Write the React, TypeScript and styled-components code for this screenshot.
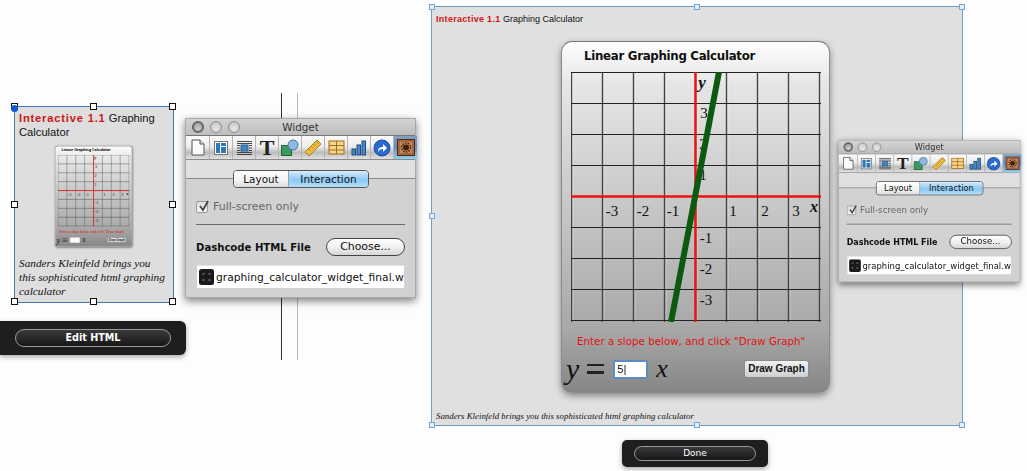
import React from 'react';
import styled, { createGlobalStyle } from 'styled-components';

const GlobalStyle = createGlobalStyle`
  html, body {
    margin: 0;
    padding: 0;
    background: #fdfdfd;
    overflow: hidden;
  }
`;

const Desktop = styled.div`
  position: relative;
  width: 1027px;
  height: 471px;
  overflow: hidden;
  font-family: "Liberation Sans", sans-serif;
`;

/* things on the free canvas */
const Placed = styled.div<{ $x: number; $y: number }>`
  position: absolute;
  left: ${(p) => p.$x}px;
  top: ${(p) => p.$y}px;
`;

const GuideLine = styled.div<{ $x: number; $color: string }>`
  position: absolute;
  left: ${(p) => p.$x}px;
  top: 93px;
  width: 1px;
  height: 267px;
  background: ${(p) => p.$color};
`;

const SelectedBox = styled.div<{ $w: number; $h: number; $blue?: boolean }>`
  position: relative;
  box-sizing: border-box;
  width: ${(p) => p.$w}px;
  height: ${(p) => p.$h}px;
  background: ${(p) => (p.$blue ? '#e0e0e0' : '#dedede')};
  border: 1px solid ${(p) => (p.$blue ? '#6f9cc9' : '#3f78b0')};
`;

const Handle = styled.span<{ $l: number; $t: number; $blue?: boolean }>`
  position: absolute;
  left: ${(p) => p.$l}%;
  top: ${(p) => p.$t}%;
  box-sizing: border-box;
  width: ${(p) => (p.$blue ? 6 : 7)}px;
  height: ${(p) => (p.$blue ? 6 : 7)}px;
  margin: ${(p) => (p.$blue ? '-3px 0 0 -3px' : '-4px 0 0 -4px')};
  background: ${(p) => (p.$blue ? '#e4eff9' : '#fff')};
  border: 1px solid ${(p) => (p.$blue ? '#6fa8dc' : '#111')};
`;

const Anchor = styled.span`
  position: absolute;
  left: -4px;
  top: -2px;
  width: 7px;
  height: 7px;
  border-radius: 50%;
  background: #1259d8;
`;

const handleSpots = [
  [0, 0], [50, 0], [100, 0],
  [0, 50], [100, 50],
  [0, 100], [50, 100], [100, 100],
];

const Handles = ({ blue }: { blue?: boolean }) => (
  <>
    {handleSpots.map(([l, t]) => (
      <Handle key={`${l}-${t}`} $l={l} $t={t} $blue={blue} />
    ))}
  </>
);

/* left inspector card */
const SmallCardBody = styled.div`
  display: flex;
  flex-direction: column;
  height: 100%;
  padding: 5px 4px 0 4px;
  box-sizing: border-box;
`;

const SmallHeading = styled.div`
  font-size: 11.2px;
  line-height: 13.5px;
  color: #111;
`;

const BigHeading = styled.div`
  font-size: 9px;
  line-height: 12px;
  color: #111;
  padding: 6px 0 0 4px;
`;

const RedLead = styled.b<{ $spacing: number }>`
  color: #d01515;
  letter-spacing: ${(p) => p.$spacing}px;
`;

const ThumbFrame = styled.div`
  width: 77px;
  height: 102px;
  margin: 7px 0 0 36px;
`;

const Scaled = styled.div<{ $scale: number }>`
  transform: scale(${(p) => p.$scale});
  transform-origin: top left;
`;

const SmallCaption = styled.div`
  margin-top: 8px;
  font-family: "Liberation Serif", serif;
  font-style: italic;
  font-size: 11.3px;
  line-height: 14px;
  color: #111;
`;

const BigCaption = styled.div`
  margin: 17px 0 0 4px;
  font-family: "Liberation Serif", serif;
  font-style: italic;
  font-size: 8.85px;
  line-height: 12px;
  color: #111;
`;

/* calculator */
const CalcCard = styled.div`
  box-sizing: border-box;
  width: 269px;
  height: 352px;
  border-radius: 11px;
  border: 1px solid #8a8a8a;
  border-top-color: #777;
  background: linear-gradient(#fdfdfd 0%, #e6e6e6 12%, #c0c0c0 55%, #a8a8a8 82%, #868686 100%);
  box-shadow: 0 3px 7px rgba(0, 0, 0, 0.4);
  font-family: "DejaVu Sans", sans-serif;
`;

const CalcTitle = styled.div`
  height: 30px;
  padding-left: 22px;
  font-size: 11.8px;
  letter-spacing: -0.3px;
  line-height: 28px;
  font-weight: 700;
  color: #111;
`;

const GraphBox = styled.svg`
  display: block;
  margin-left: 9px;
  width: 250px;
  height: 250px;
`;

const CalcPrompt = styled.div`
  margin-top: 12px;
  padding-left: 15px;
  font-size: 10.3px;
  line-height: 14px;
  color: #e41010;
  white-space: nowrap;
`;

const FormRow = styled.div`
  display: flex;
  align-items: center;
  height: 30px;
  margin-top: 6px;
  padding: 0 20px 0 4px;
`;

const MathGlyph = styled.span<{ $size: number }>`
  font-family: "Liberation Serif", serif;
  font-style: italic;
  font-size: ${(p) => p.$size}px;
  line-height: 24px;
  color: #111;
`;

const EqualSign = styled.span`
  display: block;
  width: 17px;
  height: 3px;
  margin: 0 9px 0 8px;
  border-top: 2px solid #222;
  border-bottom: 3px solid #222;
  padding-top: 2px;
  box-sizing: content-box;
`;

const SlopeInput = styled.div<{ $focused?: boolean }>`
  box-sizing: border-box;
  width: 35px;
  height: 19px;
  margin-right: 8px;
  padding-left: 2px;
  background: #fff;
  border: 2px solid ${(p) => (p.$focused ? '#5d8cc0' : '#e8e8e8')};
  border-radius: 2px;
  font-family: "Liberation Sans", sans-serif;
  font-size: 11px;
  line-height: 15px;
  color: #111;
`;

const DrawButton = styled.div`
  margin-left: auto;
  box-sizing: border-box;
  width: 65px;
  height: 18px;
  text-align: center;
  border-radius: 3px;
  border: 1px solid #8c8c8c;
  background: linear-gradient(#f2f2f2, #cfcfcf);
  font-family: "Liberation Sans", sans-serif;
  font-size: 10px;
  font-weight: 700;
  line-height: 16px;
  color: #111;
`;

const gridSpots = [0.5, 31.5, 62.5, 93.5, 124.5, 155.5, 186.5, 217.5, 248.5];

const axisLabels: [string, number, number][] = [
  ['-3', 41, 144], ['-2', 72, 144], ['-1', 102, 144],
  ['1', 162, 144], ['2', 194, 144], ['3', 225, 144],
  ['3', 133, 46], ['2', 132, 77], ['1', 132, 108],
  ['-1', 135, 171], ['-2', 135, 202], ['-3', 135, 233],
];

const Graph = ({ plotted }: { plotted?: boolean }) => (
  <GraphBox viewBox="0 0 250 250">
    {gridSpots.map((s) => (
      <line key={`w${s}`} x1={s + 1.5} y1={0} x2={s + 1.5} y2={250} stroke="#fff" strokeOpacity={0.35} />
    ))}
    {gridSpots.map((s) => (
      <line key={`v${s}`} x1={s} y1={0} x2={s} y2={250} stroke="#444" strokeWidth={1.4} />
    ))}
    {gridSpots.map((s) => (
      <line key={`h${s}`} x1={0} y1={s} x2={250} y2={s} stroke="#222" strokeWidth={1.2} />
    ))}
    <line x1={124.5} y1={0} x2={124.5} y2={250} stroke="#f01010" strokeWidth={2.4} />
    <line x1={0} y1={124.5} x2={250} y2={124.5} stroke="#f01010" strokeWidth={2.4} />
    <g fontFamily="'Liberation Serif', serif" fontSize={15} fill="#111" textAnchor="middle">
      {axisLabels.map(([t, x, y]) => (
        <text key={`${t}${x}${y}`} x={x} y={y}>{t}</text>
      ))}
      <text x={131} y={16} fontSize={17} fontStyle="italic" fontWeight={700}>y</text>
      <text x={243} y={140} fontSize={16} fontStyle="italic" fontWeight={700}>x</text>
    </g>
    {plotted && <line x1={148} y1={0} x2={100} y2={250} stroke="#0c5a10" strokeWidth={6} />}
  </GraphBox>
);

const Calculator = ({ live }: { live?: boolean }) => (
  <CalcCard>
    <CalcTitle>Linear Graphing Calculator</CalcTitle>
    <Graph plotted={live} />
    <CalcPrompt>Enter a slope below, and click "Draw Graph"</CalcPrompt>
    <FormRow>
      <MathGlyph $size={30}>y</MathGlyph>
      <EqualSign />
      <SlopeInput $focused={live}>{live ? '5|' : ''}</SlopeInput>
      <MathGlyph $size={26}>x</MathGlyph>
      <DrawButton>Draw Graph</DrawButton>
    </FormRow>
  </CalcCard>
);

const CalcSlot = styled.div`
  margin: 16px 0 0 129px;
`;

/* widget inspector window */
const WidgetWindow = styled.div`
  box-sizing: border-box;
  width: 231px;
  height: 180px;
  display: flex;
  flex-direction: column;
  background: #d2d2d2;
  border: 1px solid #a8a8a8;
  box-shadow: 0 3px 8px rgba(0, 0, 0, 0.5);
  font-family: "DejaVu Sans", sans-serif;
  color: #111;
`;

const TitleBar = styled.div`
  position: relative;
  flex: 0 0 16px;
  display: flex;
  align-items: center;
  gap: 6px;
  padding-left: 6px;
  background: linear-gradient(#d4d4d4, #bdbdbd);
`;

const TitleText = styled.span`
  position: absolute;
  left: 0;
  right: 0;
  text-align: center;
  font-size: 10.4px;
  line-height: 16px;
  color: #333;
`;

const Light = styled.span`
  box-sizing: border-box;
  width: 12px;
  height: 12px;
  border-radius: 50%;
  border: 1px solid #8c8c8c;
  background: radial-gradient(circle at 50% 70%, #e8e8e8, #bbb);

  &:first-child {
    border: 2px solid #666;
    background: radial-gradient(circle at 50% 70%, #ccc, #999);
  }
`;

const Toolbar = styled.div`
  flex: 0 0 23px;
  display: flex;
  padding-left: 1px;
  border-top: 1px solid #777;
  border-bottom: 1px solid #8a8a8a;
  background: linear-gradient(#fafafa 0%, #ececec 48%, #bcbcbc 72%, #e2e2e2 100%);
`;

const ToolCell = styled.div<{ $active?: boolean }>`
  flex: 0 0 23px;
  display: flex;
  align-items: center;
  justify-content: center;
  box-sizing: border-box;
  border-right: 1px solid #b4b4b4;
  background: ${(p) => (p.$active ? 'linear-gradient(#7f9fc0 0%, #5f8fc0 50%, #8fd0f0 100%)' : 'none')};

  &:last-child {
    border-right: 0;
  }
`;

const TabBand = styled.div`
  position: relative;
  flex: 0 0 18px;
  background: #e0e0e0;
  border-bottom: 1px solid #8a8a8a;
`;

const Segments = styled.div`
  position: absolute;
  left: 47px;
  top: 10px;
  display: flex;
  width: 136px;
  height: 18px;
  box-sizing: border-box;
  border: 1px solid #555;
  border-radius: 4px;
  overflow: hidden;
  font-size: 10.4px;
  line-height: 16px;
  text-align: center;
`;

const Segment = styled.div<{ $on?: boolean }>`
  flex: ${(p) => (p.$on ? '0 0 79px' : '1')};
  background: ${(p) => (p.$on ? 'linear-gradient(#d8ecfc, #8cc8f4 55%, #b4e0fa)' : 'linear-gradient(#fff, #f2f2f2 60%, #dcdcdc)')};
  border-left: ${(p) => (p.$on ? '1px solid #8aa' : '0')};
`;

const Panel = styled.div`
  flex: 1;
  display: flex;
  flex-direction: column;
  padding: 20px 10px 0 10px;
`;

const CheckRow = styled.div`
  display: flex;
  align-items: center;
  gap: 5px;
  height: 15px;
  font-size: 11px;
  color: #666;
`;

const CheckBox = styled.span`
  position: relative;
  box-sizing: border-box;
  width: 12px;
  height: 12px;
  border: 1px solid #999;
  border-radius: 2px;
  background: linear-gradient(#dedede, #f4f4f4);
`;

const CheckMark = styled.svg`
  position: absolute;
  left: 0;
  top: -3px;
`;

const Rule = styled.div`
  height: 1px;
  margin-top: 10px;
  background: #6a6a6a;
`;

const FileRow = styled.div`
  display: flex;
  align-items: center;
  justify-content: space-between;
  margin-top: 13px;
  height: 18px;
`;

const FileLabel = styled.b`
  font-size: 10.1px;
  white-space: nowrap;
`;

const ChooseButton = styled.div`
  box-sizing: border-box;
  width: 79px;
  height: 18px;
  border: 1px solid #444;
  border-radius: 9px;
  text-align: center;
  background: linear-gradient(#fff, #efefef 55%, #d6d6d6);
  font-size: 10.9px;
  line-height: 16px;
`;

const FileField = styled.div`
  display: flex;
  align-items: center;
  gap: 2px;
  height: 23px;
  margin: 9px 1px 0 1px;
  padding-left: 2px;
  background: #fff;
  border-top: 1px solid #e4e4e4;
  box-sizing: border-box;
  overflow: hidden;
  font-size: 10.7px;
  white-space: nowrap;
`;

const PageIcon = () => (
  <svg width="16" height="17" viewBox="0 0 16 17">
    <path d="M2 1h8l4 4v11H2z" fill="#fbfbfb" stroke="#555" />
    <path d="M10 1v4h4" fill="#ddd" stroke="#555" />
  </svg>
);

const LayoutIcon = () => (
  <svg width="16" height="16" viewBox="0 0 16 16">
    <rect x="1.5" y="1.5" width="13" height="13" fill="#fff" stroke="#777" />
    <rect x="3" y="3" width="4" height="10" fill="#2f78b8" />
    <rect x="8" y="3" width="5" height="3" fill="#2f78b8" />
    <rect x="8" y="7" width="5" height="6" fill="#2f78b8" />
  </svg>
);

const TextBoxIcon = () => (
  <svg width="17" height="16" viewBox="0 0 17 16">
    <path d="M1 1.5h15M1 3.5h15M1 12.5h15M1 14.5h15M1 5.5h3M13 5.5h3M1 8h3M13 8h3M1 10.5h3M13 10.5h3" stroke="#444" />
    <rect x="5" y="5" width="7" height="6" fill="#3f86c8" stroke="#2a5d90" />
  </svg>
);

const TextTool = styled.span`
  font-family: "Liberation Serif", serif;
  font-size: 22px;
  font-weight: 700;
  line-height: 22px;
  color: #222;
`;

const ShapesIcon = () => (
  <svg width="20" height="18" viewBox="0 0 20 18">
    <rect x="1.5" y="6.5" width="10" height="10" fill="#3a9a5c" stroke="#1f6a3a" />
    <circle cx="13" cy="6" r="5" fill="#8fb8e0" stroke="#4a78a8" />
  </svg>
);

const RulerIcon = () => (
  <svg width="18" height="18" viewBox="0 0 18 18">
    <path d="M1 13 13 1l4 4L5 17z" fill="#eebc3c" stroke="#a8801c" />
    <path d="M4.5 10l2 2M7 7.500l2 2M9.500 5l2 2M12 2.500l2 2" stroke="#a8801c" />
  </svg>
);

const TableIcon = () => (
  <svg width="17" height="15" viewBox="0 0 17 15">
    <rect x="1" y="1" width="15" height="13" fill="#f6d68a" stroke="#a06c18" />
    <path d="M1 5.500h15M1 10h15M8.500 1v13" stroke="#a06c18" />
  </svg>
);

const BarsIcon = () => (
  <svg width="16" height="16" viewBox="0 0 16 16">
    <rect x="1" y="9" width="3.500" height="6" fill="#4a88c8" stroke="#1d4a80" />
    <rect x="6" y="5" width="3.500" height="10" fill="#4a88c8" stroke="#1d4a80" />
    <rect x="11" y="1" width="3.500" height="14" fill="#4a88c8" stroke="#1d4a80" />
  </svg>
);

const ArrowIcon = () => (
  <svg width="18" height="18" viewBox="0 0 18 18">
    <circle cx="9" cy="9" r="8" fill="#2a6ad0" stroke="#1c4a98" />
    <path d="M5 13c0-4 2-5 5-5V5l4 4-4 4v-3c-2 0-4 1-5 3z" fill="#fff" />
  </svg>
);

const GearIcon = () => (
  <svg width="18" height="17" viewBox="0 0 18 17">
    <rect x="0.500" y="0.500" width="17" height="16" fill="#a8643c" stroke="#4e2a14" />
    <rect x="3" y="3" width="12" height="11" fill="#c88858" />
    <circle cx="9" cy="8.500" r="3" fill="#3a2010" />
    <circle cx="9" cy="8.500" r="4.500" fill="none" stroke="#3a2010" strokeWidth="1.500" strokeDasharray="1.500 1.300" />
  </svg>
);

const DashcodeIcon = () => (
  <svg width="15" height="16" viewBox="0 0 15 16">
    <rect width="15" height="16" rx="2.500" fill="#1a1a1a" />
    <g fill="#555">
      <circle cx="4.500" cy="5" r="1.300" />
      <circle cx="10.500" cy="5" r="1.300" />
      <circle cx="4.500" cy="11" r="1.300" />
      <circle cx="10.500" cy="11" r="1.300" />
    </g>
  </svg>
);

const Widget = () => (
  <WidgetWindow>
    <TitleBar>
      <Light />
      <Light />
      <Light />
      <TitleText>Widget</TitleText>
    </TitleBar>
    <Toolbar>
      <ToolCell><PageIcon /></ToolCell>
      <ToolCell><LayoutIcon /></ToolCell>
      <ToolCell><TextBoxIcon /></ToolCell>
      <ToolCell><TextTool>T</TextTool></ToolCell>
      <ToolCell><ShapesIcon /></ToolCell>
      <ToolCell><RulerIcon /></ToolCell>
      <ToolCell><TableIcon /></ToolCell>
      <ToolCell><BarsIcon /></ToolCell>
      <ToolCell><ArrowIcon /></ToolCell>
      <ToolCell $active><GearIcon /></ToolCell>
    </Toolbar>
    <TabBand>
      <Segments>
        <Segment>Layout</Segment>
        <Segment $on>Interaction</Segment>
      </Segments>
    </TabBand>
    <Panel>
      <CheckRow>
        <CheckBox>
          <CheckMark width="14" height="14" viewBox="0 0 14 14">
            <path d="M3 7l3 4 5-9" fill="none" stroke="#444" strokeWidth="1.800" />
          </CheckMark>
        </CheckBox>
        Full-screen only
      </CheckRow>
      <Rule />
      <FileRow>
        <FileLabel>Dashcode HTML File</FileLabel>
        <ChooseButton>Choose...</ChooseButton>
      </FileRow>
      <FileField>
        <DashcodeIcon />
        graphing_calculator_widget_final.w
      </FileField>
    </Panel>
  </WidgetWindow>
);

/* black HUD bars under the selected block */
const HudBar = styled.div<{ $w: number; $h: number; $px: number; $edge?: boolean }>`
  box-sizing: border-box;
  display: flex;
  align-items: center;
  width: ${(p) => p.$w}px;
  height: ${(p) => p.$h}px;
  padding: 0 ${(p) => p.$px}px;
  border-radius: ${(p) => (p.$edge ? '0 6px 6px 0' : '5px')};
  background: #1e1e1f;
  box-shadow: 0 2px 5px rgba(0, 0, 0, 0.35);
`;

const HudPill = styled.div<{ $h: number; $size: number; $strong?: boolean }>`
  flex: 1;
  box-sizing: border-box;
  height: ${(p) => p.$h}px;
  border: 1px solid #9a9a9e;
  border-radius: ${(p) => p.$h / 2}px;
  background: linear-gradient(#3a3a3c, #161617);
  text-align: center;
  color: #fff;
  font-family: "DejaVu Sans", sans-serif;
  font-size: ${(p) => p.$size}px;
  font-weight: ${(p) => (p.$strong ? 700 : 400)};
  line-height: ${(p) => p.$h - 2}px;
`;

const App = () => (
  <Desktop>
    <GlobalStyle />
    <GuideLine $x={281} $color="#333" />
    <GuideLine $x={297} $color="#bbb" />

    <Placed $x={14} $y={106}>
      <SelectedBox $w={160} $h={197}>
        <SmallCardBody>
          <SmallHeading>
            <RedLead $spacing={0.8}>Interactive 1.1</RedLead> Graphing Calculator
          </SmallHeading>
          <ThumbFrame>
            <Scaled $scale={0.2866}>
              <Calculator />
            </Scaled>
          </ThumbFrame>
          <SmallCaption>Sanders Kleinfeld brings you this sophisticated html graphing calculator</SmallCaption>
        </SmallCardBody>
        <Handles />
        <Anchor />
      </SelectedBox>
    </Placed>

    <Placed $x={0} $y={321}>
      <HudBar $w={186} $h={34} $px={15} $edge>
        <HudPill $h={18} $size={9.6} $strong>Edit HTML</HudPill>
      </HudBar>
    </Placed>

    <Placed $x={185} $y={118}>
      <Widget />
    </Placed>

    <Placed $x={431} $y={6}>
      <SelectedBox $w={532} $h={420} $blue>
        <BigHeading>
          <RedLead $spacing={0.3}>Interactive 1.1</RedLead> Graphing Calculator
        </BigHeading>
        <CalcSlot>
          <Calculator live />
        </CalcSlot>
        <BigCaption>Sanders Kleinfeld brings you this sophisticated html graphing calculator</BigCaption>
        <Handles blue />
      </SelectedBox>
    </Placed>

    <Placed $x={838} $y={140}>
      <Scaled $scale={0.79}>
        <Widget />
      </Scaled>
    </Placed>

    <Placed $x={622} $y={440}>
      <HudBar $w={146} $h={27} $px={12}>
        <HudPill $h={15} $size={9}>Done</HudPill>
      </HudBar>
    </Placed>
  </Desktop>
);

export default App;
